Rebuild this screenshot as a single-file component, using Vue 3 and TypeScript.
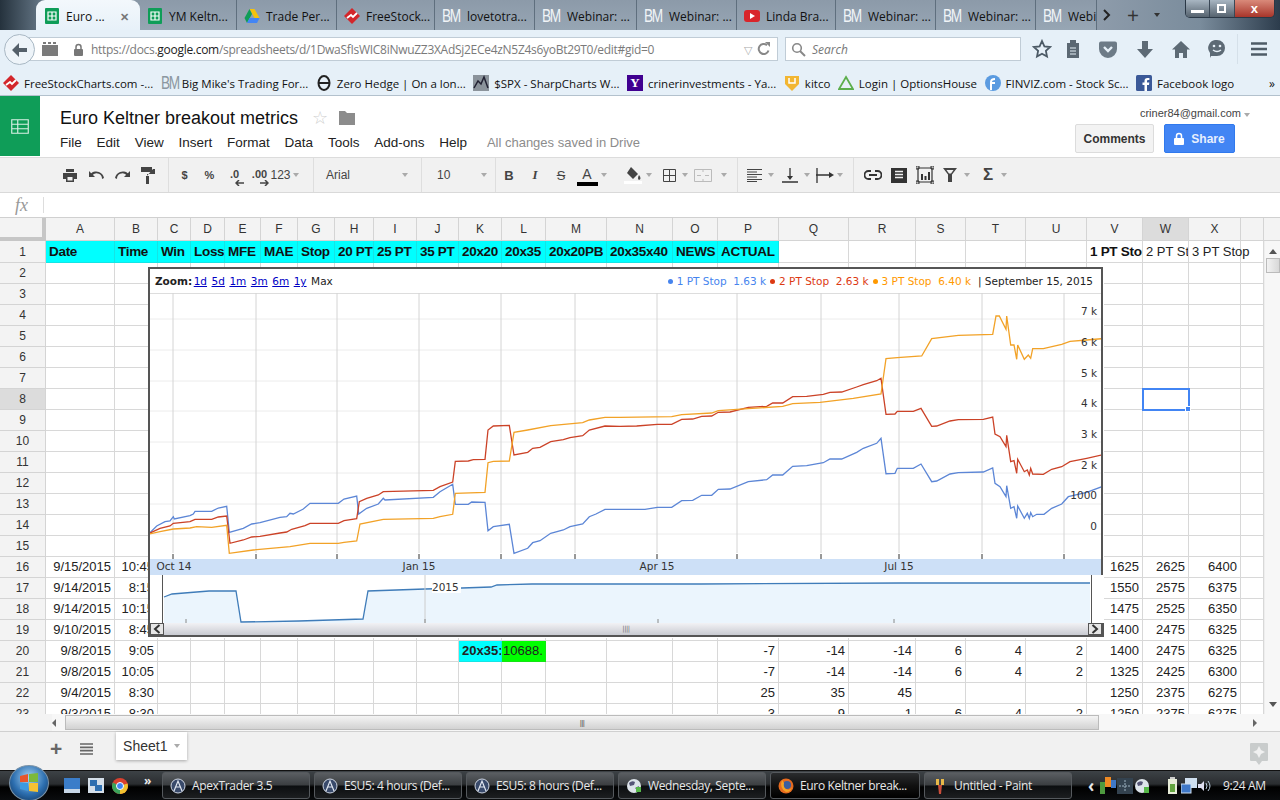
<script setup lang="ts">
import { computed } from 'vue'

type Pt = [number, number]

const tabs = [
  { label: 'YM Keltn...', icon: 'sheet', width: 97 },
  { label: 'Trade Per...', icon: 'drive', width: 100 },
  { label: 'FreeStock...', icon: 'fsc', width: 98 },
  { label: 'lovetotra...', icon: 'bm', width: 100 },
  { label: 'Webinar: ...', icon: 'bm', width: 102 },
  { label: 'Webinar: ...', icon: 'bm', width: 100 },
  { label: 'Linda Bra...', icon: 'yt', width: 99 },
  { label: 'Webinar: ...', icon: 'bm', width: 100 },
  { label: 'Webinar: ...', icon: 'bm', width: 100 },
  { label: 'Webi', icon: 'bm', width: 61 }
]

const bookmarks = [
  { label: 'FreeStockCharts.com -...', icon: 'fsc' },
  { label: "Big Mike's Trading For...", icon: 'bm' },
  { label: 'Zero Hedge | On a lon...', icon: 'zh' },
  { label: '$SPX - SharpCharts W...', icon: 'spx' },
  { label: 'crinerinvestments - Ya...', icon: 'yh' },
  { label: 'kitco', icon: 'kitco' },
  { label: 'Login | OptionsHouse', icon: 'oh' },
  { label: 'FINVIZ.com - Stock Sc...', icon: 'fv' },
  { label: 'Facebook logo', icon: 'fb' }
]

const menus = ['File', 'Edit', 'View', 'Insert', 'Format', 'Data', 'Tools', 'Add-ons', 'Help']

const columns = 'A B C D E F G H I J K L M N O P Q R S T U V W X'.split(' ').concat('')
const widths = [69, 43, 33, 34, 36, 37, 37, 39, 43, 42, 43, 44, 61, 66, 45, 61, 70, 67, 50, 60, 61, 56, 46, 52, 23]
const colTemplate = computed(() => '46px ' + widths.map((w) => w + 'px').join(' '))

const headings = ['Date', 'Time', 'Win', 'Loss', 'MFE', 'MAE', 'Stop', '20 PT', '25 PT', '35 PT', '20x20', '20x35', '20x20PB', '20x35x40', 'NEWS', 'ACTUAL']

const values: Record<number, Record<string, string>> = {
  16: { A: '9/15/2015', B: '10:45', V: '1625', W: '2625', X: '6400' },
  17: { A: '9/14/2015', B: '8:15', V: '1550', W: '2575', X: '6375' },
  18: { A: '9/14/2015', B: '10:15', V: '1475', W: '2525', X: '6350' },
  19: { A: '9/10/2015', B: '8:45', V: '1400', W: '2475', X: '6325' },
  20: { A: '9/8/2015', B: '9:05', K: '20x35:', L: '10688.', P: '-7', Q: '-14', R: '-14', S: '6', T: '4', U: '2', V: '1400', W: '2475', X: '6325' },
  21: { A: '9/8/2015', B: '10:05', P: '-7', Q: '-14', R: '-14', S: '6', T: '4', U: '2', V: '1325', W: '2425', X: '6300' },
  22: { A: '9/4/2015', B: '8:30', P: '25', Q: '35', R: '45', V: '1250', W: '2375', X: '6275' },
  23: { A: '9/3/2015', B: '8:30', P: '3', Q: '9', R: '1', S: '6', T: '4', U: '2', V: '1250', W: '2375', X: '6275' }
}

const rowNumbers = Array.from({ length: 22 }, (_, i) => i + 2)

function cellText(row: number, col: string) {
  return values[row]?.[col] ?? ''
}

function cellClass(row: number, col: string) {
  return {
    cyan: row === 20 && col === 'K',
    green: row === 20 && col === 'L',
    bold: row === 20 && col === 'K',
    left: row === 20 && (col === 'K' || col === 'L'),
    sel: row === 8 && col === 'W'
  }
}

// traced from the chart, split in two halves
const blueA: Pt[] = [[28,730],[50,708],[75,695],[90,693],[100,680],[103,687],[150,677],[160,672],[165,664],[215,664],[235,654],[260,649],[268,727],[310,715],[335,702],[360,698],[420,682],[440,680],[450,670],[460,672],[490,657],[510,640],[595,640],[612,627],[650,618],[656,672],[680,655],[715,642],[730,625],[735,630],[880,622],[900,605],[938,583],[946,643],[985,643],[995,636],[1035,637],[1044,722],[1060,710],[1108,703],[1122,790],[1163,775],[1178,758],[1200,752],[1232,730],[1270,720],[1290,710],[1328,702],[1348,680],[1368,672],[1395,658],[1440,658]]
const blueB: Pt[] = [[0,658],[75,658],[112,652],[155,652],[185,632],[218,631],[245,616],[275,616],[295,598],[330,597],[385,575],[440,569],[458,555],[488,555],[518,529],[560,527],[610,518],[630,507],[665,507],[710,487],[730,475],[770,460],[783,445],[798,551],[825,550],[832,535],[880,535],[903,522],[935,575],[950,573],[990,552],[1015,548],[1090,546],[1118,534],[1125,580],[1140,590],[1158,620],[1160,587],[1172,655],[1182,650],[1190,685],[1193,648],[1213,685],[1222,670],[1228,685],[1232,668],[1238,680],[1250,673],[1272,673],[1295,655],[1325,642],[1345,620],[1400,607],[1445,590]]
const redA: Pt[] = [[28,730],[60,715],[90,708],[100,700],[150,695],[165,688],[215,688],[235,681],[260,678],[270,760],[310,750],[335,741],[360,739],[420,729],[440,726],[455,718],[495,707],[510,700],[595,700],[612,692],[650,686],[658,635],[680,625],[715,615],[730,605],[880,601],[900,590],[938,576],[946,514],[985,513],[1000,509],[1035,508],[1044,420],[1060,408],[1108,406],[1122,495],[1163,487],[1178,475],[1200,472],[1232,455],[1270,449],[1290,443],[1328,437],[1348,420],[1395,408],[1440,409]]
const redB: Pt[] = [[0,409],[50,408],[112,403],[155,403],[185,388],[218,387],[245,379],[275,378],[295,367],[330,366],[385,352],[440,349],[458,339],[488,339],[518,320],[560,319],[610,313],[630,307],[665,306],[710,291],[730,284],[770,272],[783,265],[798,373],[825,372],[832,364],[880,364],[903,355],[935,409],[950,408],[990,393],[1015,389],[1090,388],[1118,381],[1125,432],[1140,440],[1158,470],[1160,436],[1172,515],[1182,512],[1190,550],[1193,508],[1213,545],[1222,540],[1228,555],[1232,535],[1238,552],[1270,553],[1295,538],[1325,530],[1350,515],[1400,505],[1445,495]]
const orangeA: Pt[] = [[28,732],[60,725],[100,717],[150,714],[170,710],[215,712],[260,706],[268,790],[340,780],[450,770],[510,760],[595,760],[612,757],[650,753],[660,702],[730,688],[880,685],[900,680],[938,673],[946,610],[1035,607],[1044,518],[1060,514],[1108,513],[1122,427],[1163,420],[1232,407],[1328,398],[1348,390],[1395,382],[1440,382]]
const orangeB: Pt[] = [[0,382],[155,380],[185,374],[275,369],[295,362],[385,356],[488,349],[518,341],[600,337],[700,325],[783,312],[798,206],[832,203],[905,198],[935,146],[1015,136],[1118,133],[1128,78],[1138,78],[1158,118],[1160,78],[1172,165],[1182,165],[1190,208],[1193,165],[1213,208],[1225,195],[1232,205],[1238,176],[1270,176],[1325,163],[1350,154],[1400,150],[1445,146]]

function trace(a: Pt[], b: Pt[]) {
  const left = a.map(([x, y]) => `${(140 + x / 3).toFixed(1)},${(290 + y / 3).toFixed(1)}`)
  const right = b.map(([x, y]) => `${(620 + x / 3).toFixed(1)},${(290 + y / 3).toFixed(1)}`)
  return left.concat(right).join(' ')
}

const series = [
  { color: '#5c86d6', points: trace(blueA, blueB) },
  { color: '#cb4227', points: trace(redA, redB) },
  { color: '#f2a227', points: trace(orangeA, orangeB) }
]

const vLines = [173, 256, 337, 419, 501, 575, 657, 737, 821, 899, 982, 1064]
const hLines = [319, 350, 381, 411, 442, 473, 504, 534]
const yLabels = [
  { t: '7 k', y: 315 }, { t: '6 k', y: 346 }, { t: '5 k', y: 377 }, { t: '4 k', y: 407 },
  { t: '3 k', y: 438 }, { t: '2 k', y: 469 }, { t: '1000', y: 499 }, { t: '0', y: 530 }
]
const xLabels = [
  { t: 'Oct 14', x: 174 }, { t: 'Jan 15', x: 419 }, { t: 'Apr 15', x: 657 }, { t: 'Jul 15', x: 899 }
]
const zooms = ['1d', '5d', '1m', '3m', '6m', '1y']

const navLine = '163,597 171,594 208,591 235,591 240,622 298,621 362,619 367,591 424,589 461,588 490,587 496,585 531,584 700,584 900,583 1089,583'
const navFill = navLine + ' 1089,623 163,623'

const taskButtons = [
  { label: 'ApexTrader 3.5', icon: 'apex', active: false },
  { label: 'ESU5: 4 hours (Def...', icon: 'apex', active: false },
  { label: 'ESU5: 8 hours (Def...', icon: 'apex', active: false },
  { label: 'Wednesday, Septe...', icon: 'globe', active: false },
  { label: 'Euro Keltner break...', icon: 'fox', active: true },
  { label: 'Untitled - Paint', icon: 'paint', active: false }
]
</script>

<template>
  <div class="page">
    <!-- browser tabs -->
    <div class="tabstrip">
      <div class="tab active">
        <svg class="fav" viewBox="0 0 16 16"><rect x="1" y="0" width="14" height="16" rx="1" fill="#0f9d58" /><path d="M4 4h8v8H4zM4 8h8M8 4v8" fill="none" stroke="#fff" stroke-width="1.2" /></svg>
        <span>Euro ...</span>
        <span class="tab-x">✕</span>
      </div>
      <div v-for="(t, i) in tabs" :key="i" class="tab" :style="{ width: t.width + 'px' }">
        <svg v-if="t.icon === 'sheet'" class="fav" viewBox="0 0 16 16"><rect x="1" y="0" width="14" height="16" rx="1" fill="#0f9d58" /><path d="M4 4h8v8H4zM4 8h8M8 4v8" fill="none" stroke="#fff" stroke-width="1.2" /></svg>
        <svg v-else-if="t.icon === 'drive'" class="fav" viewBox="0 0 16 16"><path d="M5.5 1h5l5 9h-5z" fill="#f4c20d" /><path d="M5.5 1 .5 10l2.5 5 5-9z" fill="#0f9d58" /><path d="M3 15h10l2.5-5h-10z" fill="#4285f4" /></svg>
        <svg v-else-if="t.icon === 'fsc'" class="fav" viewBox="0 0 16 16"><path d="M8 0l8 8-8 8-8-8z" fill="#d3262b" /><path d="M3 10l4-3 2 2 4-4" fill="none" stroke="#fff" stroke-width="1.8" /></svg>
        <svg v-else-if="t.icon === 'yt'" class="fav" viewBox="0 0 16 16"><rect y="2" width="16" height="12" rx="3" fill="#d9252a" /><path d="M6 5l5 3-5 3z" fill="#fff" /></svg>
        <span v-else class="bm">BM</span>
        <span class="tab-label">{{ t.label }}</span>
      </div>
      <div class="strip-ctrls">
        <svg width="10" height="12" viewBox="0 0 10 12"><path d="M2 1l5 5-5 5" fill="none" stroke="#222" stroke-width="2" /></svg>
        <span class="plus">+</span>
        <span class="caret dark" />
      </div>
      <div class="winbtns">
        <span class="wb"><i class="min" /></span>
        <span class="wb"><i class="max" /></span>
        <span class="wb close">x</span>
      </div>
    </div>

    <!-- navigation bar -->
    <div class="navbar">
      <div class="back">
        <svg width="18" height="16" viewBox="0 0 18 16"><path d="M8 1 1 8l7 7V10h8V6H8z" fill="#55606a" /></svg>
      </div>
      <div class="urlbox">
        <svg class="tabs-ic" width="16" height="14" viewBox="0 0 16 14"><path d="M0 3h16v11H0zM1 0h3v2H1zM6 0h3v2H6zM11 0h3v2h-3z" fill="#7b7b7b" /></svg>
        <svg class="lock" width="11" height="13" viewBox="0 0 11 13"><path d="M3 6V4a2.5 2.5 0 0 1 5 0v2" fill="none" stroke="#777" stroke-width="1.5" /><rect x="1" y="6" width="9" height="7" rx="1" fill="#777" /></svg>
        <span class="url">https://docs.<b>google.com</b>/spreadsheets/d/1DwaSfIsWIC8iNwuZZ3XAdSj2ECe4zN5Z4s6yoBt29T0/edit#gid=0</span>
        <span class="url-drop">▽</span>
        <svg width="14" height="14" viewBox="0 0 14 14"><path d="M11.5 8.5A5 5 0 1 1 10 3.2" fill="none" stroke="#888" stroke-width="2" /><path d="M8 0h5v5z" fill="#888" /></svg>
      </div>
      <div class="searchbox">
        <svg width="15" height="15" viewBox="0 0 15 15"><circle cx="6" cy="6" r="4.3" fill="none" stroke="#888" stroke-width="1.6" /><path d="M9 9l5 5" stroke="#888" stroke-width="2" /></svg>
        <em>Search</em>
      </div>
      <div class="nav-icons">
        <svg width="20" height="20" viewBox="0 0 20 20"><path d="M10 2l2.4 5.3 5.7.7-4.2 3.9 1.1 5.7L10 14.8l-5 2.8 1.1-5.7L1.900 8l5.700-.7z" fill="none" stroke="#4c5a66" stroke-width="1.800" /></svg>
        <svg width="16" height="18" viewBox="0 0 16 18"><path d="M2 3h12v15H2zM5 0h6v4H5z" fill="#5b6873" /><path d="M5 8h6M5 11h6M5 14h6" stroke="#e6f0f8" stroke-width="1.2" /></svg>
        <svg width="18" height="17" viewBox="0 0 18 17"><path d="M0 2.500A2 2 0 0 1 2 .5h14a2 2 0 0 1 2 2V8a9 9 0 0 1-18 0z" fill="#6d7b87" /><path d="M5 6l4 4 4-4" fill="none" stroke="#e6f0f8" stroke-width="2.400" /></svg>
        <svg width="16" height="17" viewBox="0 0 16 17"><path d="M5 0h6v8h5l-8 9-8-9h5z" fill="#5d6a75" /></svg>
        <svg width="18" height="17" viewBox="0 0 18 17"><path d="M9 0l9 8.500h-3V17h-4v-5H7v5H3V8.500H0z" fill="#5d6a75" /></svg>
        <svg width="18" height="18" viewBox="0 0 18 18"><path d="M9 0a8 8 0 0 1 0 16H3l-1 2v-5A8 8 0 0 1 9 0z" fill="#5d6a75" /><circle cx="6" cy="6" r="1.300" fill="#e6f0f8" /><circle cx="12" cy="6" r="1.300" fill="#e6f0f8" /><path d="M5 10q4 3 8 0" fill="none" stroke="#e6f0f8" stroke-width="1.500" /></svg>
        <span class="nav-sep" />
        <svg width="16" height="14" viewBox="0 0 16 14"><path d="M0 1.500h16M0 7h16M0 12.500h16" stroke="#4f5c67" stroke-width="2.500" /></svg>
      </div>
    </div>

    <!-- bookmarks -->
    <div class="bookmarks">
      <div v-for="b in bookmarks" :key="b.label" class="bookmark">
        <svg v-if="b.icon === 'fsc'" class="fav" viewBox="0 0 16 16"><path d="M8 0l8 8-8 8-8-8z" fill="#d3262b" /><path d="M3 10l4-3 2 2 4-4" fill="none" stroke="#fff" stroke-width="1.800" /></svg>
        <span v-else-if="b.icon === 'bm'" class="bm small">BM</span>
        <svg v-else-if="b.icon === 'zh'" class="fav" viewBox="0 0 16 16"><ellipse cx="8" cy="8" rx="5.500" ry="7" fill="none" stroke="#222" stroke-width="2" /><path d="M3 8h10" stroke="#222" stroke-width="2" /></svg>
        <svg v-else-if="b.icon === 'spx'" class="fav" viewBox="0 0 16 16"><rect width="16" height="16" fill="#8b939b" /><path d="M1 13l4-7 3 3 3-7 4 11" fill="none" stroke="#223" stroke-width="1.500" /></svg>
        <span v-else-if="b.icon === 'yh'" class="yh">Y</span>
        <svg v-else-if="b.icon === 'kitco'" class="fav" viewBox="0 0 16 16"><path d="M1 1h14v8l-7 7-7-7z" fill="#f2b632" /><path d="M5 3v5h6V3" fill="none" stroke="#fff" stroke-width="1.500" /></svg>
        <svg v-else-if="b.icon === 'oh'" class="fav" viewBox="0 0 16 16"><path d="M8 2l7 12H1z" fill="none" stroke="#5cae4c" stroke-width="1.800" /></svg>
        <svg v-else-if="b.icon === 'fv'" class="fav" viewBox="0 0 16 16"><circle cx="8" cy="8" r="8" fill="#5b9be0" /><path d="M6 15V7q0-3 4-3M5 8h5" fill="none" stroke="#fff" stroke-width="2" /></svg>
        <svg v-else class="fav" viewBox="0 0 16 16"><rect width="16" height="16" rx="1.500" fill="#3b5998" /><path d="M11 16v-6h2l.3-2.500H11V6q0-1 1-1h1.400V3H11.500Q8.500 3 8.500 6v1.500H6.500V10h2v6z" fill="#fff" /></svg>
        <span>{{ b.label }}</span>
      </div>
      <span class="more">»</span>
    </div>

    <!-- sheets header -->
    <div class="docbar">
      <div class="logo">
        <svg width="18" height="15" viewBox="0 0 24 20" preserveAspectRatio="none"><path d="M1 1h22v18H1zM1 7h22M1 13h22M9 1v18" fill="none" stroke="#fff" stroke-width="1.500" opacity=".85" /></svg>
      </div>
      <div class="doc-main">
        <div class="doc-title">
          <span class="title">Euro Keltner breakout metrics</span>
          <span class="star">☆</span>
          <svg width="16" height="14" viewBox="0 0 16 14"><path d="M0 0h6l2 2h8v12H0z" fill="#8c8c8c" /></svg>
        </div>
        <div class="menus">
          <span v-for="m in menus" :key="m">{{ m }}</span>
          <span class="saved">All changes saved in Drive</span>
        </div>
      </div>
      <div class="doc-right">
        <div class="email">criner84@gmail.com <span class="caret" /></div>
        <div class="doc-btns">
          <button class="btn-comments">Comments</button>
          <button class="btn-share">
            <svg width="10" height="13" viewBox="0 0 10 13"><path d="M2.500 6V4a2.500 2.500 0 0 1 5 0v2" fill="none" stroke="#fff" stroke-width="1.500" /><rect y="6" width="10" height="7" rx="1" fill="#fff" /></svg>
            Share
          </button>
        </div>
      </div>
    </div>

    <!-- toolbar -->
    <div class="toolbar">
      <span class="tb"><svg width="14" height="13" viewBox="0 0 14 13"><path d="M3 0h8v3H3zM0 4h14v6h-3v3H3v-3H0z" fill="#444" /><path d="M4.500 8h5v3.500h-5z" fill="#f1f1f1" /></svg></span>
      <span class="tb"><svg width="15" height="9" viewBox="0 0 15 9"><path d="M0 0v6h6L3.800 3.800A5.500 5.500 0 0 1 13 8l2-1A8 8 0 0 0 2.200 2.200z" fill="#444" /></svg></span>
      <span class="tb"><svg width="15" height="9" viewBox="0 0 15 9"><path d="M15 0v6H9l2.200-2.200A5.500 5.500 0 0 0 2 8L0 7A8 8 0 0 1 12.800 2.200z" fill="#444" /></svg></span>
      <span class="tb"><svg width="14" height="17" viewBox="0 0 14 17"><path d="M0 0h11v5H0zM12 2h2v5H6v3H5" fill="#444" /><path d="M5 9h3v8H5z" fill="#444" /></svg></span>
      <i class="sep s-a" />
      <span class="tb w25 b-txt">$</span>
      <span class="tb w25 b-txt">%</span>
      <span class="tb w25 dec">.0<svg width="9" height="6" viewBox="0 0 9 6"><path d="M9 3H2M4 0 1 3l3 3" fill="none" stroke="#444" stroke-width="1.500" /></svg></span>
      <span class="tb w25 dec">.00<svg width="9" height="6" viewBox="0 0 9 6"><path d="M0 3h7M5 0l3 3-3 3" fill="none" stroke="#444" stroke-width="1.500" /></svg></span>
      <span class="tb w25 n123">123<i class="caret" /></span>
      <i class="sep s-b" />
      <span class="font-pick">Arial<i class="caret" /></span>
      <i class="sep" />
      <span class="size-pick">10<i class="caret" /></span>
      <i class="sep" />
      <span class="tb b-txt big">B</span>
      <span class="tb ital">I</span>
      <span class="tb strike">S</span>
      <span class="tb color-a">A<i /></span>
      <span class="caret c-a" />
      <span class="tb fill-ic">
        <svg width="18" height="18" viewBox="0 0 18 18"><path d="M7 1l7 7-5 5-6-6z" fill="#444" /><path d="M15 9q3 4 0 5-2-1 0-5z" fill="#444" /><rect y="15" width="18" height="3" fill="#fff" /></svg>
      </span>
      <span class="caret c-fill" />
      <span class="tb borders"><svg width="13" height="13" viewBox="0 0 13 13"><path d="M.5.5h12v12H.5zM6.500 0v13M0 6.500h13" fill="none" stroke="#444" /></svg></span>
      <span class="caret c-b" />
      <span class="tb merge"><svg width="18" height="13" viewBox="0 0 18 13"><path d="M.5.5h17v12H.5zM9 0v3M9 10v3M3 6.500h4M11 6.500h4" fill="none" stroke="#bbb" /></svg></span>
      <span class="caret c-m" />
      <i class="sep s-c" />
      <span class="tb align"><svg width="15" height="13" viewBox="0 0 15 13"><path d="M0 .5h15M0 3h10M0 5.500h15M0 8h10M0 10.500h15M0 12.500h10" stroke="#444" /></svg></span>
      <span class="caret c-al" />
      <span class="tb valign"><svg width="16" height="15" viewBox="0 0 16 15"><path d="M0 14h16M8 0v10" stroke="#333" stroke-width="1.300" /><path d="M5 8l3 4 3-4z" fill="#333" /></svg></span>
      <span class="caret c-al" />
      <span class="tb wrap-ic"><svg width="18" height="15" viewBox="0 0 18 15"><path d="M1 0v15M0 7h14" stroke="#333" stroke-width="1.300" /><path d="M13 4l5 3-5 3z" fill="#333" /></svg></span>
      <span class="caret c-wr" />
      <i class="sep s-d" />
      <span class="tb"><svg width="18" height="10" viewBox="0 0 18 10"><path d="M7 1H4.500a4 4 0 0 0 0 8H7M11 1h2.500a4 4 0 0 1 0 8H11M5 5h8" fill="none" stroke="#333" stroke-width="1.800" /></svg></span>
      <span class="tb"><svg width="16" height="15" viewBox="0 0 16 15"><path d="M0 0h16v15H0z" fill="#333" /><path d="M4 3.500h8M4 6.500h8M4 9.500h8" stroke="#f1f1f1" stroke-width="1.300" /></svg></span>
      <span class="tb w25"><svg width="18" height="18" viewBox="0 0 18 18"><path d="M2 2h14v14H2z" fill="none" stroke="#333" stroke-width="1.200" /><path d="M5 8h2v6H5zM8.500 10h2v4h-2zM12 6h2v8h-2z" fill="#333" /><path d="M0 0h3v3H0zM15 0h3v3h-3zM0 15h3v3H0zM15 15h3v3h-3z" fill="none" stroke="#333" /></svg></span>
      <span class="tb w25"><svg width="14" height="14" viewBox="0 0 14 14"><path d="M0 0h14L9 6.500V14H5V6.500z" fill="#444" /><path d="M3.500 2h7L8 5.500H6z" fill="#f1f1f1" /></svg></span>
      <span class="caret c-fl" />
      <span class="tb sigma">Σ</span>
      <span class="caret c-si" />
    </div>

    <!-- formula bar -->
    <div class="formula">
      <span class="fx">fx</span>
      <i class="fx-sep" />
    </div>

    <!-- grid -->
    <div class="sheet" :style="{ '--cols': colTemplate }">
      <div class="col-head">
        <div class="corner" />
        <div v-for="c in columns" :key="c" class="col-cell" :class="{ on: c === 'W' }">{{ c }}</div>
        <div class="col-tail" />
      </div>
      <div class="sheet-body">
        <div class="rows">
          <div class="row first">
            <div class="row-num">1</div>
            <div v-for="h in headings" :key="h" class="cell cyan bold left">{{ h }}</div>
            <div v-for="c in columns.slice(16, 21)" :key="c" class="cell" />
            <div class="cell bold left">1 PT Stop</div>
            <div class="cell left">2 PT Stop</div>
            <div class="cell left spill">3 PT Stop</div>
            <div class="cell" />
          </div>
          <div v-for="n in rowNumbers" :key="n" class="row">
            <div class="row-num" :class="{ on: n === 8 }">{{ n }}</div>
            <div v-for="c in columns" :key="c" class="cell" :class="cellClass(n, c)">{{ cellText(n, c) }}</div>
          </div>
        </div>
        <div class="vscroll">
          <span class="arrow up" />
          <span class="v-thumb" />
          <span class="arrow down" />
        </div>

        <!-- embedded chart floats over the cells -->
        <div class="chart">
          <div class="chart-main">
            <div class="legend">
              <div class="zooms">
                <b>Zoom:</b>
                <a v-for="z in zooms" :key="z">{{ z }}</a>
                <span>Max</span>
              </div>
              <div class="readout">
                <i class="dot blue-dot" /><span class="blue">1 PT Stop &nbsp;1.63 k</span>
                <i class="dot red-dot" /><span class="red">2 PT Stop &nbsp;2.63 k</span>
                <i class="dot orange-dot" /><span class="orange">3 PT Stop &nbsp;6.40 k</span>
                <span class="date">| September 15, 2015</span>
              </div>
            </div>
            <svg class="plot" width="951" height="282" viewBox="150 293 951 282">
              <line x1="150" x2="1101" y1="293" y2="293" stroke="#bbb" />
              <line v-for="y in hLines" :key="y" x1="150" x2="1101" :y1="y" :y2="y" stroke="#ececec" />
              <line v-for="x in vLines" :key="x" :x1="x" :x2="x" y1="293" y2="553" stroke="#d4d4d4" />
              <line v-for="x in vLines" :key="'t' + x" :x1="x" :x2="x" y1="554" y2="559" stroke="#333" />
              <rect x="150" y="559" width="951" height="16" fill="#cde0f7" />
              <text v-for="l in xLabels" :key="l.t" :x="l.x" y="570" text-anchor="middle" class="tick">{{ l.t }}</text>
              <polyline v-for="s in series" :key="s.color" :points="s.points" fill="none" :stroke="s.color" stroke-width="1.300" />
              <text v-for="l in yLabels" :key="l.t" x="1097" :y="l.y" text-anchor="end" class="tick">{{ l.t }}</text>
            </svg>
          </div>
          <div class="nav-row">
            <svg width="928" height="48" viewBox="162 575 928 48">
              <rect x="162" y="575" width="928" height="48" fill="#fff" />
              <polygon :points="navFill" fill="#ebf5fd" />
              <polyline :points="navLine" fill="none" stroke="#3f7cb9" stroke-width="1.300" />
              <line x1="424" x2="424" y1="575" y2="623" stroke="#ccc" />
              <path d="M185 619v4M424 619v4M657 619v4M893 619v4" stroke="#888" />
              <rect x="431" y="581" width="29" height="12" fill="#fff" />
              <text x="431" y="591" class="tick">2015</text>
            </svg>
          </div>
          <div class="nav-scroll">
            <span class="nav-btn"><svg width="8" height="10" viewBox="0 0 8 10"><path d="M6.500 1 2 5l4.500 4" fill="none" stroke="#333" stroke-width="2" /></svg></span>
            <span class="nav-grip">||||</span>
            <span class="nav-btn"><svg width="8" height="10" viewBox="0 0 8 10"><path d="M1.500 1 6 5 1.500 9" fill="none" stroke="#333" stroke-width="2" /></svg></span>
          </div>
        </div>
      </div>
      <div class="hscroll">
        <span class="hs-gutter" />
        <span class="arrow left" />
        <span class="h-thumb"><i>|||</i></span>
        <span class="arrow right" />
      </div>
    </div>

    <!-- sheet tabs -->
    <div class="sheetbar">
      <span class="add">+</span>
      <svg width="13" height="12" viewBox="0 0 13 12"><path d="M0 1h13M0 4.300h13M0 7.600h13M0 11h13" stroke="#666" stroke-width="1.700" /></svg>
      <div class="sheet-tab">Sheet1 <span class="caret" /></div>
      <svg class="explore" width="18" height="22" viewBox="0 0 18 22"><path d="M1 0h16a1 1 0 0 1 1 1v16a1 1 0 0 1-1 1h-5l-3 4-3-4H1a1 1 0 0 1-1-1V1a1 1 0 0 1 1-1z" fill="#c9cccc" /><path d="M9 3l2 4 4 2-4 2-2 4-2-4-4-2 4-2z" fill="#f1f1f1" /></svg>
    </div>

    <!-- windows taskbar -->
    <div class="taskbar">
      <div class="orb">
        <svg width="20" height="20" viewBox="0 0 20 20"><path d="M1 3l8-2v8H1z" fill="#e8552b" /><path d="M10 1l9-1v9h-9z" fill="#7db93c" /><path d="M1 10h8v8l-8-2z" fill="#3d9ae0" /><path d="M10 10h9v9l-9-1z" fill="#f5c233" /></svg>
      </div>
      <div class="quick">
        <svg width="16" height="15" viewBox="0 0 16 15"><rect width="16" height="13" fill="#3b7dc9" /><rect y="11" width="16" height="4" fill="#c7d6e6" /></svg>
        <svg width="16" height="15" viewBox="0 0 16 15"><rect width="16" height="15" fill="#d5dfe9" /><rect x="2" y="2" width="7" height="6" fill="#2f6fb0" /><rect x="7" y="7" width="7" height="6" fill="#2f6fb0" /></svg>
        <svg width="16" height="16" viewBox="0 0 16 16"><circle cx="8" cy="8" r="8" fill="#d9402f" /><path d="M8 8 15.500 5.500A8 8 0 0 1 8 16z" fill="#f2c230" /><path d="M8 8 8 16A8 8 0 0 1 .8 4.500z" fill="#3ba35b" /><circle cx="8" cy="8" r="3.500" fill="#4285f4" stroke="#fff" /></svg>
        <span class="q-more">»</span>
      </div>
      <div v-for="b in taskButtons" :key="b.label" class="task" :class="{ active: b.active }">
        <svg v-if="b.icon === 'apex'" width="16" height="16" viewBox="0 0 16 16"><circle cx="8" cy="8" r="7" fill="#394a6b" stroke="#cfd6e2" /><path d="M4 13 8 3l4 10M6 9h5" fill="none" stroke="#dfe5ef" stroke-width="1.200" /></svg>
        <svg v-else-if="b.icon === 'globe'" width="16" height="16" viewBox="0 0 16 16"><circle cx="8" cy="8" r="7" fill="#dde4ea" /><path d="M3 5q3-3 6-1l-1 3-4 1zM9 10l4-2-1 5z" fill="#557" /><path d="M10 9h5v5h-5z" fill="#55b748" /></svg>
        <svg v-else-if="b.icon === 'fox'" width="16" height="16" viewBox="0 0 16 16"><circle cx="8" cy="8" r="7.500" fill="#e66a1f" /><circle cx="9" cy="7" r="4" fill="#3d5f9e" /><path d="M4 2q-3 8 4 12 5 0 6-5-2 4-6 2-3-2-2-6z" fill="#f4a326" /></svg>
        <svg v-else width="16" height="16" viewBox="0 0 16 16"><path d="M4 1h3v6H4zM9 1h3v6H9z" fill="#e9b949" /><path d="M6 7h4L9 16H7z" fill="#c94d3a" /></svg>
        <span>{{ b.label }}</span>
      </div>
      <div class="tray">
        <span class="tray-arrow">‹</span>
        <svg width="16" height="17" viewBox="0 0 16 17"><path d="M0 5h5v12H0z" fill="#4e9a3f" /><path d="M5 0h6v10H5z" fill="#ef8a23" /><path d="M11 3h5v8h-5z" fill="#3f78c8" /></svg>
        <svg width="16" height="16" viewBox="0 0 16 16"><rect width="16" height="16" fill="#33424f" /><path d="M8 2v12M2 8h12" stroke="#9fb3c2" stroke-dasharray="2 1" /></svg>
        <svg width="16" height="16" viewBox="0 0 16 16"><circle cx="8" cy="8" r="7" fill="#dde4ea" /><path d="M3 5q3-3 6-1l-1 3-4 1z" fill="#557" /><path d="M10 9h5v6h-5z" fill="#55b748" /></svg>
        <svg class="tray-gap" width="15" height="17" viewBox="0 0 15 17"><rect x="3" y="2" width="9" height="15" fill="#e7ecd8" /><rect x="5" y="7" width="5" height="8" fill="#63a53f" /><rect x="5" width="5" height="2" fill="#ccc" /></svg>
        <svg width="16" height="16" viewBox="0 0 16 16"><rect x="4" width="12" height="10" fill="#cfdfef" /><rect y="6" width="10" height="9" fill="#3f78c8" stroke="#cfdfef" /></svg>
        <svg width="14" height="14" viewBox="0 0 14 14"><path d="M0 5h3l3-3v10L3 9H0z" fill="#dde" /><path d="M8 4q2 3 0 6M10 2q4 5 0 10" fill="none" stroke="#bcd" /></svg>
        <span class="clock">9:24 AM</span>
      </div>
    </div>
  </div>
</template>

<style scoped>
.page {
  width: 1280px;
  height: 800px;
  overflow: hidden;
  display: flex;
  flex-direction: column;
  background: #fff;
  font-family: "Liberation Sans", Arial, sans-serif;
}

.fav {
  width: 16px;
  height: 16px;
  flex: none;
}

.caret {
  display: inline-block;
  width: 0;
  height: 0;
  border: 3.5px solid transparent;
  border-top: 4px solid #aaa;
  border-bottom: 0;
}

.caret.dark {
  border-top-color: #333;
}

/* browser chrome */
.tabstrip {
  height: 30px;
  flex: none;
  display: flex;
  padding-left: 36px;
  box-sizing: border-box;
  position: relative;
  background: linear-gradient(90deg, #25323d 0, #5c6d7c 36px, #8897a5 60px, #8d9baa 1100px, #7a8c9c 1200px, #2c3c4c 1280px);
  font-family: "Open Sans", "Noto Sans", sans-serif;
  font-size: 12px;
  color: #111;
}

.tab {
  height: 30px;
  display: flex;
  align-items: center;
  gap: 6px;
  padding: 2px 0 0 7px;
  box-sizing: border-box;
  border-right: 1px solid #5f6f7e;
  background: linear-gradient(#8c9aa9, #97a6b4);
  overflow: hidden;
  white-space: nowrap;
}

.tab.active {
  width: 104px;
  padding-left: 8px;
  border: 0;
  border-radius: 9px 9px 0 0;
  background: linear-gradient(#f3f8fc, #e7f1f9);
}

.tab-x {
  margin-left: 9px;
  font-size: 11px;
  font-weight: 700;
  color: #777;
}

.bm {
  font-family: "Liberation Sans", sans-serif;
  font-size: 19px;
  letter-spacing: -2px;
  width: 19px;
  color: #f0f4f7;
  transform: scaleX(0.72);
  transform-origin: left;
  flex: none;
}

.bm.small {
  width: 16px;
  color: #8b97a1;
}

.strip-ctrls {
  display: flex;
  align-items: center;
  gap: 15px;
  padding-left: 5px;
  height: 30px;
}

.plus {
  font-size: 21px;
  line-height: 1;
  color: #333;
}

.winbtns {
  position: absolute;
  right: 5px;
  top: 0;
  width: 90px;
  height: 18px;
  display: flex;
  border: 1px solid #2a3846;
  border-top: 0;
  border-radius: 0 0 5px 5px;
  box-sizing: border-box;
  overflow: hidden;
}

.wb {
  flex: 1;
  display: flex;
  align-items: center;
  justify-content: center;
  background: linear-gradient(#a8b6c2, #56636f);
  border-right: 1px solid #3a4856;
}

.wb .min {
  width: 13px;
  height: 3px;
  background: #fff;
  margin-top: 6px;
}

.wb .max {
  width: 9px;
  height: 9px;
  border: 2px solid #fff;
  box-sizing: border-box;
}

.wb.close {
  flex: 1.7;
  border: 0;
  background: linear-gradient(#d98a7a, #a8352a);
  color: #fff;
  font: 700 13px "Liberation Sans", sans-serif;
}

.navbar {
  height: 38px;
  flex: none;
  position: relative;
  display: flex;
  align-items: center;
  background: #e6f0f8;
  font-family: "Open Sans", "Noto Sans", sans-serif;
  font-size: 12px;
}

.back {
  position: absolute;
  left: 4px;
  top: 4px;
  width: 31px;
  height: 31px;
  border-radius: 50%;
  border: 1px solid #a9b8c4;
  background: #eef4f9;
  box-sizing: border-box;
  display: flex;
  align-items: center;
  justify-content: center;
}

.urlbox {
  margin-left: 28px;
  width: 750px;
  height: 24px;
  box-sizing: border-box;
  padding: 0 6px 0 13px;
  display: flex;
  align-items: center;
  background: #fff;
  border: 1px solid #c0ccd6;
  color: #7a7a7a;
}

.tabs-ic {
  margin-right: 15px;
}

.lock {
  margin-right: 7px;
}

.url {
  width: 653px;
  white-space: nowrap;
  overflow: hidden;
  font-size: 12px;
  letter-spacing: -0.29px;
}

.url b {
  font-weight: 400;
  color: #222;
}

.url-drop {
  font-size: 11px;
  color: #aaa;
  margin-right: 5px;
}

.searchbox {
  margin-left: 7px;
  width: 236px;
  height: 24px;
  box-sizing: border-box;
  display: flex;
  align-items: center;
  gap: 6px;
  padding-left: 5px;
  background: #fff;
  border: 1px solid #c0ccd6;
  color: #777;
}

.nav-icons {
  margin-left: 11px;
  flex: 1;
  display: flex;
  align-items: center;
}

.nav-icons > :nth-child(2) {
  margin-left: 13px;
}

.nav-icons > :nth-child(3) {
  margin-left: 18px;
}

.nav-icons > :nth-child(4) {
  margin-left: 20px;
}

.nav-icons > :nth-child(5) {
  margin-left: 19px;
}

.nav-icons > :nth-child(6) {
  margin-left: 18px;
}

.nav-icons > :nth-child(7) {
  margin-left: 11px;
}

.nav-icons > :nth-child(8) {
  margin-left: 13px;
}

.nav-sep {
  width: 1px;
  height: 30px;
  background: #d5e0e9;
}

.bookmarks {
  height: 28px;
  flex: none;
  display: flex;
  align-items: center;
  gap: 7.500px;
  padding: 3px 0 0 3px;
  box-sizing: border-box;
  background: #e6f0f8;
  border-bottom: 1px solid #b3c1cd;
  font-family: "Open Sans", "Noto Sans", sans-serif;
  font-size: 11.500px;
  color: #111;
  position: relative;
}

.bookmark {
  display: flex;
  align-items: center;
  gap: 5px;
  white-space: nowrap;
}

.yh {
  width: 16px;
  height: 16px;
  background: #400090;
  color: #fff;
  font: 700 13px/16px "Liberation Serif", serif;
  text-align: center;
}

.more {
  position: absolute;
  right: 5px;
  font-size: 12px;
}

/* sheets chrome */
.docbar {
  height: 61px;
  flex: none;
  display: flex;
  background: #fff;
}

.logo {
  width: 40px;
  height: 60px;
  background: #0f9d58;
  display: flex;
  align-items: center;
  justify-content: center;
}

.doc-main {
  margin-left: 20px;
  flex: 1;
}

.doc-title {
  display: flex;
  align-items: center;
  height: 30px;
  margin-top: 7px;
  gap: 9px;
}

.title {
  font-size: 18px;
  color: #111;
  margin-right: 5px;
}

.star {
  font-size: 18px;
  color: #cfcfcf;
  width: 18px;
}

.menus {
  display: flex;
  gap: 14.800px;
  font-size: 13.500px;
  color: #222;
  margin-top: 2px;
}

.saved {
  margin-left: 5px;
  font-size: 13px;
  line-height: 15.500px;
  color: #8c8c8c;
}

.doc-right {
  width: 205px;
  flex: none;
}

.email {
  margin-top: 10px;
  height: 15px;
  font-size: 11px;
  line-height: 15px;
  color: #444;
  text-align: right;
  padding-right: 30px;
  white-space: nowrap;
}

.doc-btns {
  display: flex;
  gap: 10px;
  margin-top: 3px;
}

.doc-btns button {
  height: 29px;
  font: 700 12px "Liberation Sans", sans-serif;
  border-radius: 2px;
  padding: 0;
}

.btn-comments {
  width: 79px;
  background: #f3f3f3;
  border: 1px solid #dcdcdc;
  color: #333;
}

.btn-share {
  width: 71px;
  background: #4285f4;
  border: 1px solid #3079ed;
  color: #e8f0fe;
  display: flex;
  align-items: center;
  justify-content: center;
  gap: 7px;
}

.toolbar {
  height: 36px;
  flex: none;
  display: flex;
  align-items: center;
  padding-left: 57px;
  box-sizing: border-box;
  background: #f1f1f1;
  border-top: 1px solid #dcdcdc;
  border-bottom: 1px solid #d9d9d9;
  color: #444;
  font-size: 12px;
}

.tb {
  width: 26px;
  height: 24px;
  display: flex;
  align-items: center;
  justify-content: center;
  flex: none;
}

.tb.w25 {
  width: 25px;
}

.sep {
  width: 1px;
  height: 34px;
  background: #dedede;
  flex: none;
}

.s-a {
  margin: 0 3px 0 7px;
}

.s-b {
  margin-left: 16px;
}

.b-txt {
  font-weight: 700;
  font-size: 11px;
}

.big {
  font-size: 13px;
}

.dec {
  font-size: 11px;
  font-weight: 700;
  position: relative;
  white-space: nowrap;
  padding-bottom: 2px;
}

.dec svg {
  position: absolute;
  right: 3px;
  bottom: 2px;
}

.n123 {
  gap: 2px;
  white-space: nowrap;
}

.font-pick,
.size-pick {
  display: flex;
  align-items: center;
  justify-content: space-between;
  box-sizing: border-box;
  font-size: 12px;
  color: #444;
}

.font-pick {
  width: 107px;
  padding: 0 13px 0 12px;
}

.size-pick {
  width: 73px;
  padding: 0 8px 0 15px;
}

.ital {
  font: italic 700 13px "Liberation Serif", serif;
}

.strike {
  font-size: 13px;
  text-decoration: line-through;
}

.color-a {
  flex-direction: column;
  font-size: 14px;
  line-height: 15px;
  margin-top: 3px;
}

.color-a i {
  width: 21px;
  height: 4px;
  background: #000;
}

.c-a {
  margin-left: 1px;
}

.fill-ic {
  margin-left: 15px;
  width: 22px;
}

.c-fill {
  margin-left: 2px;
}

.borders {
  margin-left: 4px;
}

.merge {
  margin-left: 1px;
  width: 27px;
}

.c-m {
  margin-left: 5px;
}

.s-c {
  margin-left: 10px;
}

.align {
  margin-left: 3px;
}

.c-al {
  margin-left: 1px;
}

.valign {
  margin-left: 3px;
}

.wrap-ic {
  margin-left: 2px;
}

.c-wr {
  margin-left: -1px;
}

.s-d {
  margin-left: 10px;
  margin-right: 6px;
}

.c-fl {
  margin-left: 2px;
}

.sigma {
  margin-left: 5px;
  font-size: 17px;
  font-weight: 700;
}

.formula {
  height: 25px;
  flex: none;
  display: flex;
  align-items: center;
  background: #fff;
  border-bottom: 1px solid #d0d0d0;
  box-sizing: border-box;
}

.fx {
  width: 43px;
  text-align: center;
  font: italic 18px "Liberation Serif", serif;
  color: #999;
}

.fx-sep {
  width: 1px;
  height: 16px;
  background: #ddd;
}

/* grid */
.sheet {
  flex: none;
  height: 513px;
  display: flex;
  flex-direction: column;
  font-size: 13px;
  color: #222;
}

.col-head {
  height: 23px;
  flex: none;
  display: grid;
  grid-template-columns: var(--cols) 16px;
  background: #f3f3f3;
  font-size: 12px;
  color: #333;
}

.corner {
  box-sizing: border-box;
  border-right: 4px solid #c6c6c6;
  border-bottom: 4px solid #c6c6c6;
}

.col-cell {
  display: flex;
  align-items: center;
  justify-content: center;
  border-right: 1px solid #d4d4d4;
  border-bottom: 1px solid #d4d4d4;
}

.col-cell.on {
  background: #dcdcdc;
}

.col-tail {
  border-bottom: 1px solid #d4d4d4;
}

.sheet-body {
  height: 473px;
  flex: none;
  display: flex;
  position: relative;
  overflow: hidden;
}

.rows {
  width: 1264px;
  flex: none;
}

.row {
  display: grid;
  grid-template-columns: var(--cols);
  height: 21px;
}

.row.first {
  height: 22px;
}

.row-num {
  background: #f3f3f3;
  border-right: 1px solid #d4d4d4;
  border-bottom: 1px solid #d4d4d4;
  display: flex;
  align-items: center;
  justify-content: center;
  font-size: 12px;
  color: #333;
}

.row-num.on {
  background: #dcdcdc;
}

.cell {
  box-sizing: border-box;
  padding: 0 3px;
  border-right: 1px solid #d8d8d8;
  border-bottom: 1px solid #d8d8d8;
  line-height: 20px;
  text-align: right;
  white-space: nowrap;
  overflow: hidden;
  color: #222;
}

.row.first .cell {
  line-height: 21px;
  font-size: 13px;
}

.cell.left {
  text-align: left;
}

.cell.spill {
  overflow: visible;
}

.cell.bold {
  font-weight: 700;
}

.row.first .cell.bold {
  font-size: 13.500px;
  letter-spacing: -0.3px;
  color: #111;
}

.cell.cyan {
  background: #00ffff;
  border-color: #14e5e5;
}

.cell.green {
  background: #00ff00;
  border-color: #14e514;
  padding: 0 1px;
}

.cell.sel {
  overflow: visible;
  position: relative;
  outline: 2px solid #4285f4;
  outline-offset: -1px;
}

.cell.sel::after {
  content: "";
  position: absolute;
  right: -3px;
  bottom: -3px;
  width: 6px;
  height: 6px;
  background: #4285f4;
  border: 1px solid #fff;
  box-sizing: border-box;
}

.vscroll {
  width: 16px;
  flex: none;
  display: flex;
  flex-direction: column;
  align-items: center;
  background: #f7f7f7;
  border-left: 1px solid #eee;
  box-sizing: border-box;
  position: relative;
}

.arrow {
  width: 0;
  height: 0;
  border: 4px solid transparent;
}

.arrow.up {
  border-bottom: 5px solid #555;
  border-top: 0;
  margin-top: 8px;
}

.arrow.down {
  border-top: 5px solid #555;
  border-bottom: 0;
  margin-top: auto;
  margin-bottom: 7px;
}

.v-thumb {
  width: 14px;
  height: 15px;
  margin-top: 4px;
  box-sizing: border-box;
  background: linear-gradient(90deg, #f2f2f2, #d8d8d8);
  border: 1px solid #bbb;
}

.chart {
  position: absolute;
  left: 148px;
  top: 26px;
  width: 956px;
  height: 371px;
  display: flex;
  flex-direction: column;
  font-family: "DejaVu Sans", sans-serif;
  font-size: 10.500px;
  color: #222;
  background: #fff;
}

.chart-main {
  border: 2px solid #555;
  border-bottom: 0;
  box-sizing: border-box;
  width: 955px;
  background: #fff;
}

.legend {
  height: 24px;
  display: flex;
  align-items: center;
  justify-content: space-between;
  padding: 0 8px 0 5px;
}

.zooms {
  display: flex;
  gap: 4.500px;
  align-items: center;
}

.zooms b {
  margin-right: -3px;
}

.zooms a {
  color: #0000c4;
  text-decoration: underline;
}

.readout {
  display: flex;
  align-items: center;
  gap: 4px;
  white-space: nowrap;
}

.dot {
  width: 5px;
  height: 5px;
  border-radius: 50%;
}

.blue-dot {
  background: #4684ee;
}

.red-dot {
  background: #dc3912;
}

.orange-dot {
  background: #ff9900;
}

.readout .blue {
  color: #4684ee;
}

.readout .red {
  color: #dc3912;
}

.readout .orange {
  color: #ff9900;
}

.readout .date {
  color: #222;
  margin-left: 3px;
}

.plot {
  display: block;
}

.tick {
  font-family: "DejaVu Sans", sans-serif;
  font-size: 10.500px;
  fill: #333;
}

.nav-row {
  height: 48px;
  border-left: 2px solid #555;
  padding-left: 12px;
  display: flex;
}

.nav-row svg {
  border-left: 1px solid #555;
  border-right: 1px solid #555;
}

.nav-scroll {
  height: 14px;
  width: 956px;
  box-sizing: border-box;
  display: flex;
  align-items: center;
  justify-content: space-between;
  background: linear-gradient(#f2f2f5, #c9cbd2);
  border-bottom: 2px solid #555;
  border-left: 2px solid #555;
  border-right: 2px solid #555;
}

.nav-btn {
  width: 14px;
  height: 12px;
  display: flex;
  align-items: center;
  justify-content: center;
  background: #e6e6e6;
  border: 1px solid #555;
  box-sizing: border-box;
}

.nav-grip {
  font-size: 7px;
  letter-spacing: -0.5px;
  color: #777;
}

.hscroll {
  height: 17px;
  flex: none;
  display: flex;
  align-items: center;
  background: #f7f7f7;
  font-size: 9px;
  color: #555;
}

.hs-gutter {
  width: 52px;
  height: 17px;
  background: #f3f3f3;
  flex: none;
}

.arrow.left {
  border-right: 4px solid #666;
  border-left: 0;
  flex: none;
}

.arrow.right {
  border-left: 4px solid #666;
  border-right: 0;
  flex: none;
  margin-left: 154px;
}

.h-thumb {
  width: 1034px;
  height: 15px;
  margin-left: 9px;
  border: 1px solid #bbb;
  box-sizing: border-box;
  background: linear-gradient(#f4f4f4, #d2d2d2);
  display: flex;
  align-items: center;
  justify-content: center;
  flex: none;
}

.h-thumb i {
  font-style: normal;
  font-size: 8px;
  letter-spacing: -0.5px;
}

.sheetbar {
  height: 39px;
  flex: none;
  position: relative;
  display: flex;
  align-items: flex-start;
  background: #f1f1f1;
  border-top: 1px solid #d0d0d0;
  box-sizing: border-box;
  padding-left: 50px;
}

.sheetbar > svg:not(.explore) {
  margin: 11px 0 0 18px;
}

.add {
  font-size: 21px;
  line-height: 1;
  font-weight: 700;
  color: #666;
  margin-top: 6px;
}

.sheet-tab {
  margin: 0 0 0 23px;
  width: 71px;
  height: 28px;
  background: #fff;
  box-shadow: 0 1px 3px rgba(0, 0, 0, 0.3);
  display: flex;
  align-items: center;
  justify-content: center;
  gap: 7px;
  font-size: 14px;
  color: #333;
}

.explore {
  position: absolute;
  right: 12px;
  top: 11px;
}

/* windows taskbar */
.taskbar {
  flex: 1;
  display: flex;
  align-items: center;
  gap: 4px;
  position: relative;
  background: linear-gradient(#3d4246 0, #2a2d30 45%, #000 55%, #0a0c0e 100%);
  border-top: 1px solid #111;
  box-sizing: border-box;
  font-family: "Open Sans", "Noto Sans", sans-serif;
  font-size: 12px;
  letter-spacing: -0.35px;
  color: #e8e8e8;
}

.orb {
  position: absolute;
  left: 9px;
  top: -6px;
  width: 40px;
  height: 36px;
  border-radius: 50%;
  background: radial-gradient(circle at 50% 35%, #a8d5f5, #2d6fb0 55%, #0b2c52);
  border: 1px solid #7b93a8;
  display: flex;
  align-items: center;
  justify-content: center;
  box-sizing: border-box;
}

.quick {
  margin-left: 64px;
  width: 94px;
  display: flex;
  align-items: center;
  gap: 8px;
  flex: none;
}

.q-more {
  font-size: 12px;
  font-weight: 700;
  margin: -10px 0 0 8px;
}

.task {
  width: 148px;
  height: 27px;
  flex: none;
  box-sizing: border-box;
  display: flex;
  align-items: center;
  gap: 6px;
  padding-left: 7px;
  white-space: nowrap;
  overflow: hidden;
  border: 1px solid #55595d;
  border-radius: 3px;
  background: linear-gradient(#5a5e62, #3b3e41 48%, #0c0e10 52%, #1c1e20);
}

.task.active {
  width: 150px;
  background: linear-gradient(#2a2c2e, #111 50%, #000);
}

.tray {
  margin-left: 4px;
  flex: 1;
  display: flex;
  align-items: center;
  gap: 1px;
  padding-left: 3px;
}

.tray-arrow {
  font-size: 17px;
  font-weight: 700;
  line-height: 1;
  margin: 0 5px 0 5px;
}

.tray-gap {
  margin-left: 14px;
}

.clock {
  margin-left: 10px;
  font-size: 12px;
}
</style>

<style>
html,
body {
  margin: 0;
  background: #fff;
}
</style>
